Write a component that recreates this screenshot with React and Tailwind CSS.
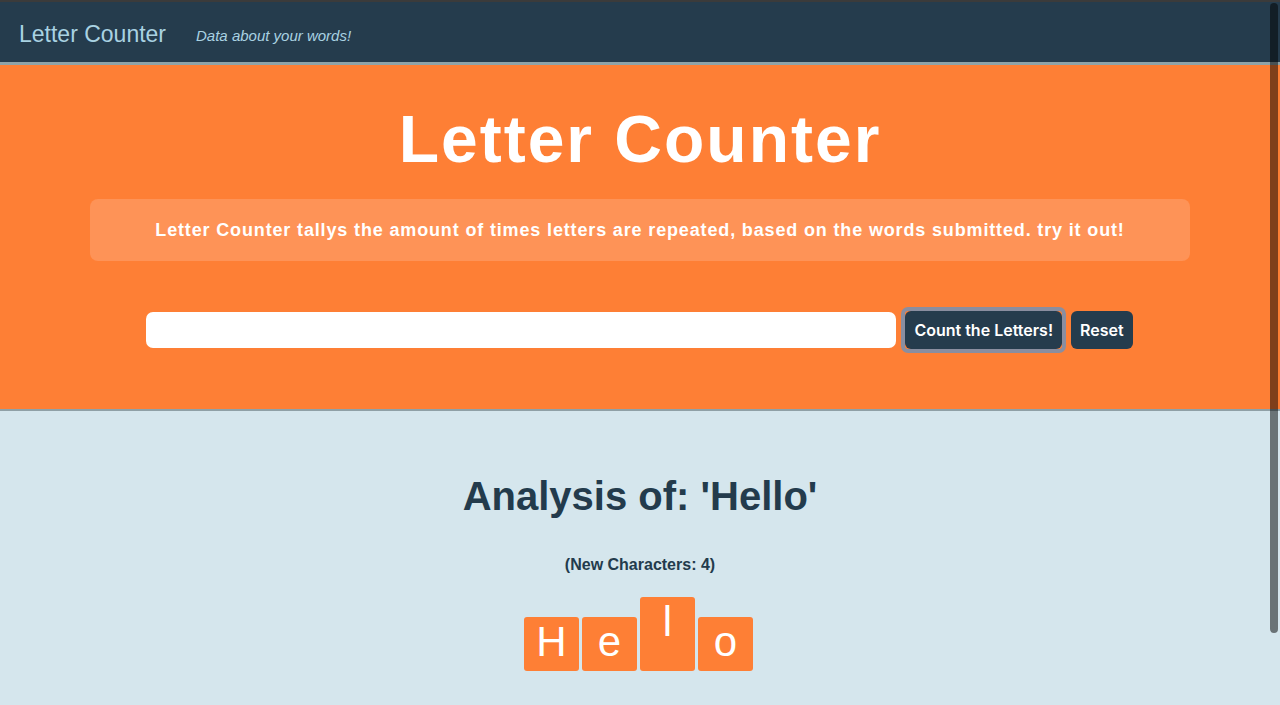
import React from "react";

const letters = [
  { ch: "H", n: 1 },
  { ch: "e", n: 1 },
  { ch: "l", n: 2 },
  { ch: "o", n: 1 },
];

export default function App() {
  return (
    <div
      className="relative h-[705px] w-[1280px] overflow-hidden bg-[#d5e6ed]"
      style={{ fontFamily: '"Liberation Sans", Arial, sans-serif' }}
    >
      {/* top bar */}
      <div className="h-[2px] bg-[#3b3b3b]" />
      <nav className="flex h-[63px] items-center gap-[30px] border-b-[3px] border-[#8fa3a8] bg-[#253c4d] pl-[19px] pt-[5px]">
        <span className="text-[23px] leading-none text-[#a9d2e2]">Letter Counter</span>
        <span className="pt-[3px] text-[15px] italic text-[#a9d2e2]">Data about your words!</span>
      </nav>

      {/* hero */}
      <section className="flex h-[346px] flex-col items-center border-b-2 border-[#8fa0a6] bg-[#fe7f35]">
        <h1 className="mt-[34px] text-[66px] font-bold leading-[80px] tracking-[2px] text-white">
          Letter Counter
        </h1>
        <div className="mt-[20px] flex h-[62px] w-[1100px] items-center justify-center rounded-[8px] bg-[#fe9357]">
          <p className="text-[18px] font-bold tracking-[0.85px] text-white">
            Letter Counter tallys the amount of times letters are repeated, based on the words submitted. try it out!
          </p>
        </div>
        <div className="mt-[46px] flex items-center pr-[1px]">
          <input
            className="h-[36px] w-[750px] rounded-[7px] bg-white outline-none"
            type="text"
          />
          <div className="ml-[5px] rounded-[7px] border-[4px] border-[#8a8ea0] p-0">
            <button
              className="h-[38px] rounded-[6px] bg-[#253c4d] px-[9px] text-[16px] font-semibold text-white"
              style={{ fontFamily: 'Inter, "Liberation Sans", sans-serif' }}
            >
              Count the Letters!
            </button>
          </div>
          <button
            className="ml-[5px] h-[38px] rounded-[6px] bg-[#253c4d] px-[9px] text-[16px] font-semibold text-white"
            style={{ fontFamily: 'Inter, "Liberation Sans", sans-serif' }}
          >
            Reset
          </button>
        </div>
      </section>

      {/* analysis */}
      <section className="flex flex-col items-center">
        <h2 className="mt-[61px] text-[40px] font-bold leading-[48px] text-[#233b4c]">
          Analysis of: 'Hello'
        </h2>
        <p className="mt-[33px] text-[16px] font-bold text-[#233b4c]">(New Characters: 4)</p>
        <div className="mr-[3px] mt-[20px] flex items-end gap-[3px]">
          {letters.map((l, i) => (
            <div
              key={i}
              className="flex w-[55px] justify-center rounded-[3px] bg-[#fe7f35]"
              style={{ height: 54 + (l.n - 1) * 20 }}
            >
              <span className="pt-[1px] text-[42px] leading-[48px] text-white">{l.ch}</span>
            </div>
          ))}
        </div>
      </section>

      {/* scrollbar thumb overlay */}
      <div className="absolute right-[2px] top-[3px] h-[630px] w-[8px] rounded-full bg-[rgba(0,0,0,0.5)]" />
    </div>
  );
}
